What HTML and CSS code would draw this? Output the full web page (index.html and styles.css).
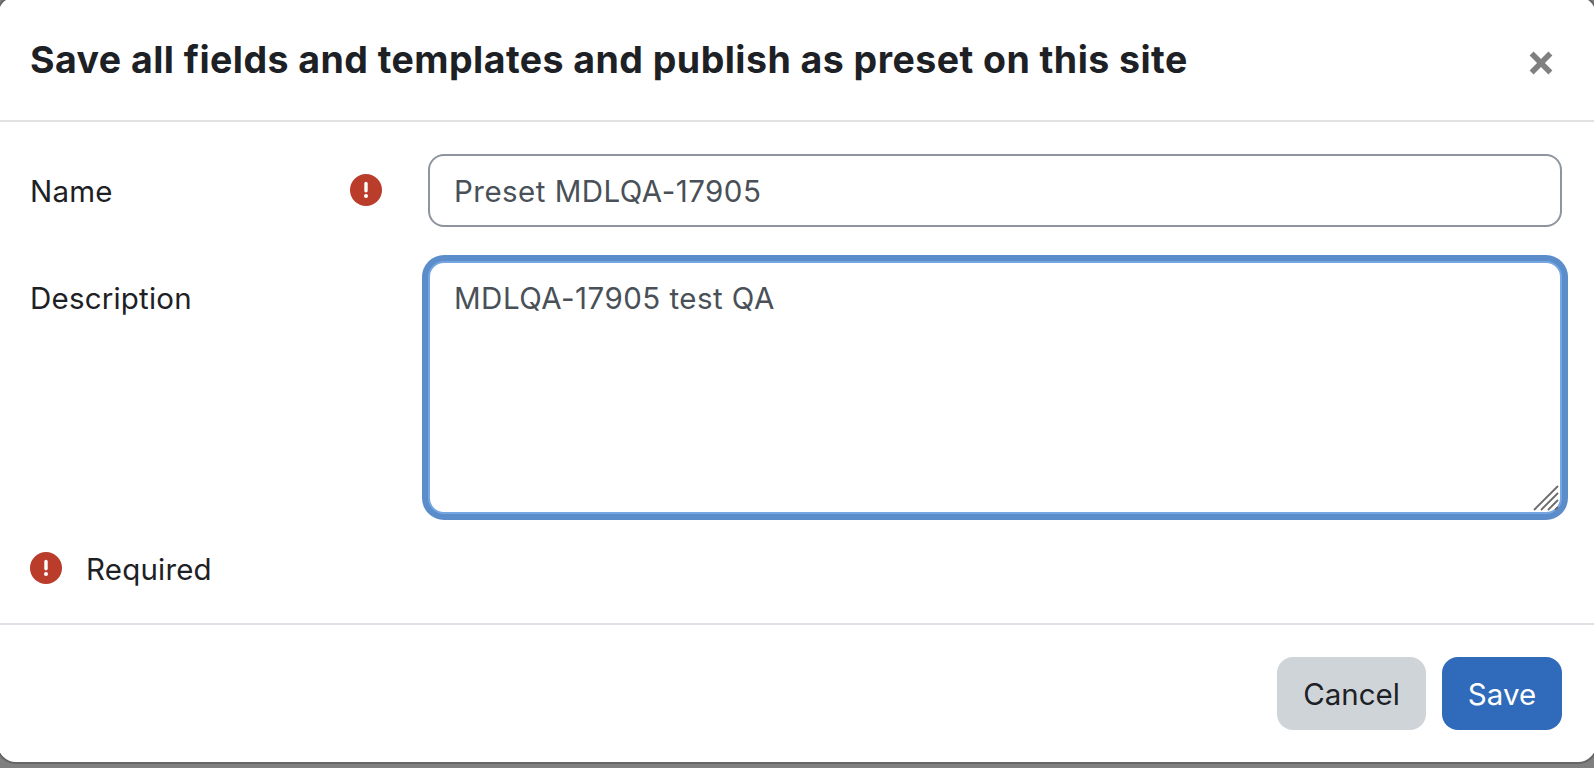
FILE: index.html
```
<!DOCTYPE html>
<html lang="en">

<head>
    <meta charset="UTF-8">
    <title>Save as preset</title>
    <link rel="stylesheet" href="styles.css">
</head>

<body>
    <div class="modal">
        <div class="modal-header">
            <h5 class="modal-title">Save all fields and templates and publish as preset on this site</h5>
            <button class="close" type="button" aria-label="Close">
                <svg width="24" height="24" viewBox="0 0 24 24">
                    <path d="M2.6 2.6L21.4 21.4M21.4 2.6L2.6 21.4" />
                </svg>
            </button>
        </div>
        <form class="modal-body">
            <div class="row">
                <div class="label">
                    <label for="name">Name</label>
                    <svg class="req" width="32" height="32" viewBox="0 0 32 32">
                        <circle cx="16" cy="16" r="16" />
                        <path d="M16 9.5v7.3" />
                        <circle class="dot" cx="16" cy="22" r="2" />
                    </svg>
                </div>
                <input class="control" id="name" type="text" value="Preset MDLQA-17905">
            </div>
            <div class="row">
                <div class="label">
                    <label for="desc">Description</label>
                </div>
                <div class="area">
                    <textarea class="control focus" id="desc">MDLQA-17905 test QA</textarea>
                    <!-- resize handle -->
                    <svg class="grip" width="26" height="26" viewBox="0 0 26 26">
                        <path d="M1 25L25 1M8 25L25 8M15 25L25 15M22 25L25 22" />
                    </svg>
                </div>
            </div>
            <div class="required">
                <svg class="req" width="32" height="32" viewBox="0 0 32 32">
                    <circle cx="16" cy="16" r="16" />
                    <path d="M16 9.5v7.3" />
                    <circle class="dot" cx="16" cy="22" r="2" />
                </svg>
                <span>Required</span>
            </div>
        </form>
        <div class="modal-footer">
            <button class="btn cancel" type="button">Cancel</button>
            <button class="btn save" type="button">Save</button>
        </div>
    </div>
</body>
</html>
```

FILE: styles.css
```
* {
    box-sizing: border-box;
    margin: 0;
    padding: 0;
}

body {
    height: 768px;
    overflow: hidden;
    background: #7f7f7f;
    color: #1d2125;
    font-family: Inter, "Liberation Sans", sans-serif;
    font-size: 29.5px;
    line-height: 45px;
    letter-spacing: 0.2px;
}

.modal {
    width: 1598px;
    height: 765px;
    margin: -3px 0 0 -2px;
    background: #fff;
    border-radius: 18px;
    box-shadow: 0 0 0 2px #666;
}

.modal-header {
    display: flex;
    justify-content: space-between;
    height: 125px;
    padding: 35px 43px 0 32px;
    border-bottom: 2px solid #dfe1e2;
}

.modal-title {
    font-size: 37.5px;
    line-height: 56px;
    font-weight: 700;
    letter-spacing: 0.45px;
    white-space: nowrap;
}

.close {
    width: 24px;
    height: 24px;
    margin-top: 19px;
    background: none;
    border: 0;
}

.close svg {
    display: block;
    overflow: visible;
    fill: none;
    stroke: #808080;
    stroke-width: 5.6;
}

.modal-body {
    height: 501px;
    padding: 32px 34px 0 32px;
}

.row {
    display: flex;
    margin-bottom: 34px;
}

.row + .row {
    margin-bottom: 33px;
}

.label {
    display: flex;
    justify-content: space-between;
    width: 398px;
    padding: 15px 46px 0 0;
}

.req {
    display: block;
    flex: none;
    fill: #ba3d2c;
}

.req path {
    stroke: #fff;
    stroke-width: 3.4;
    stroke-linecap: round;
}

.req .dot {
    fill: #fff;
}

.label .req {
    margin-top: 5px;
}

.control {
    display: block;
    flex: 1;
    width: 100%;
    height: 73px;
    padding: 13px 24px 12px;
    background: #fff;
    border: 2px solid #8f959e;
    border-radius: 16px;
    outline: 0;
    color: #495057;
    font: inherit;
    letter-spacing: 0.47px;
    resize: none;
}

.area {
    position: relative;
    flex: 1;
}

textarea.control {
    height: 253px;
}

.focus {
    border-color: #76a6e2;
    box-shadow: 0 0 0 6px #5b8dca;
}

.grip {
    position: absolute;
    right: 3px;
    bottom: 3px;
    fill: none;
    stroke: #6b6b6b;
    stroke-width: 1.8;
}

.required {
    display: flex;
}

.required .req {
    margin: 5px 24px 0 0;
}

.modal-footer {
    display: flex;
    justify-content: flex-end;
    gap: 16px;
    padding: 32px 34px 0;
    border-top: 2px solid #dee2e6;
}

.btn {
    width: 149px;
    height: 73px;
    padding-top: 2px;
    border: 0;
    border-radius: 16px;
    background: #ced4d8;
    color: #1d2125;
    font: inherit;
}

.btn.save {
    width: 120px;
    background: #306aba;
    color: #fff;
}
```
